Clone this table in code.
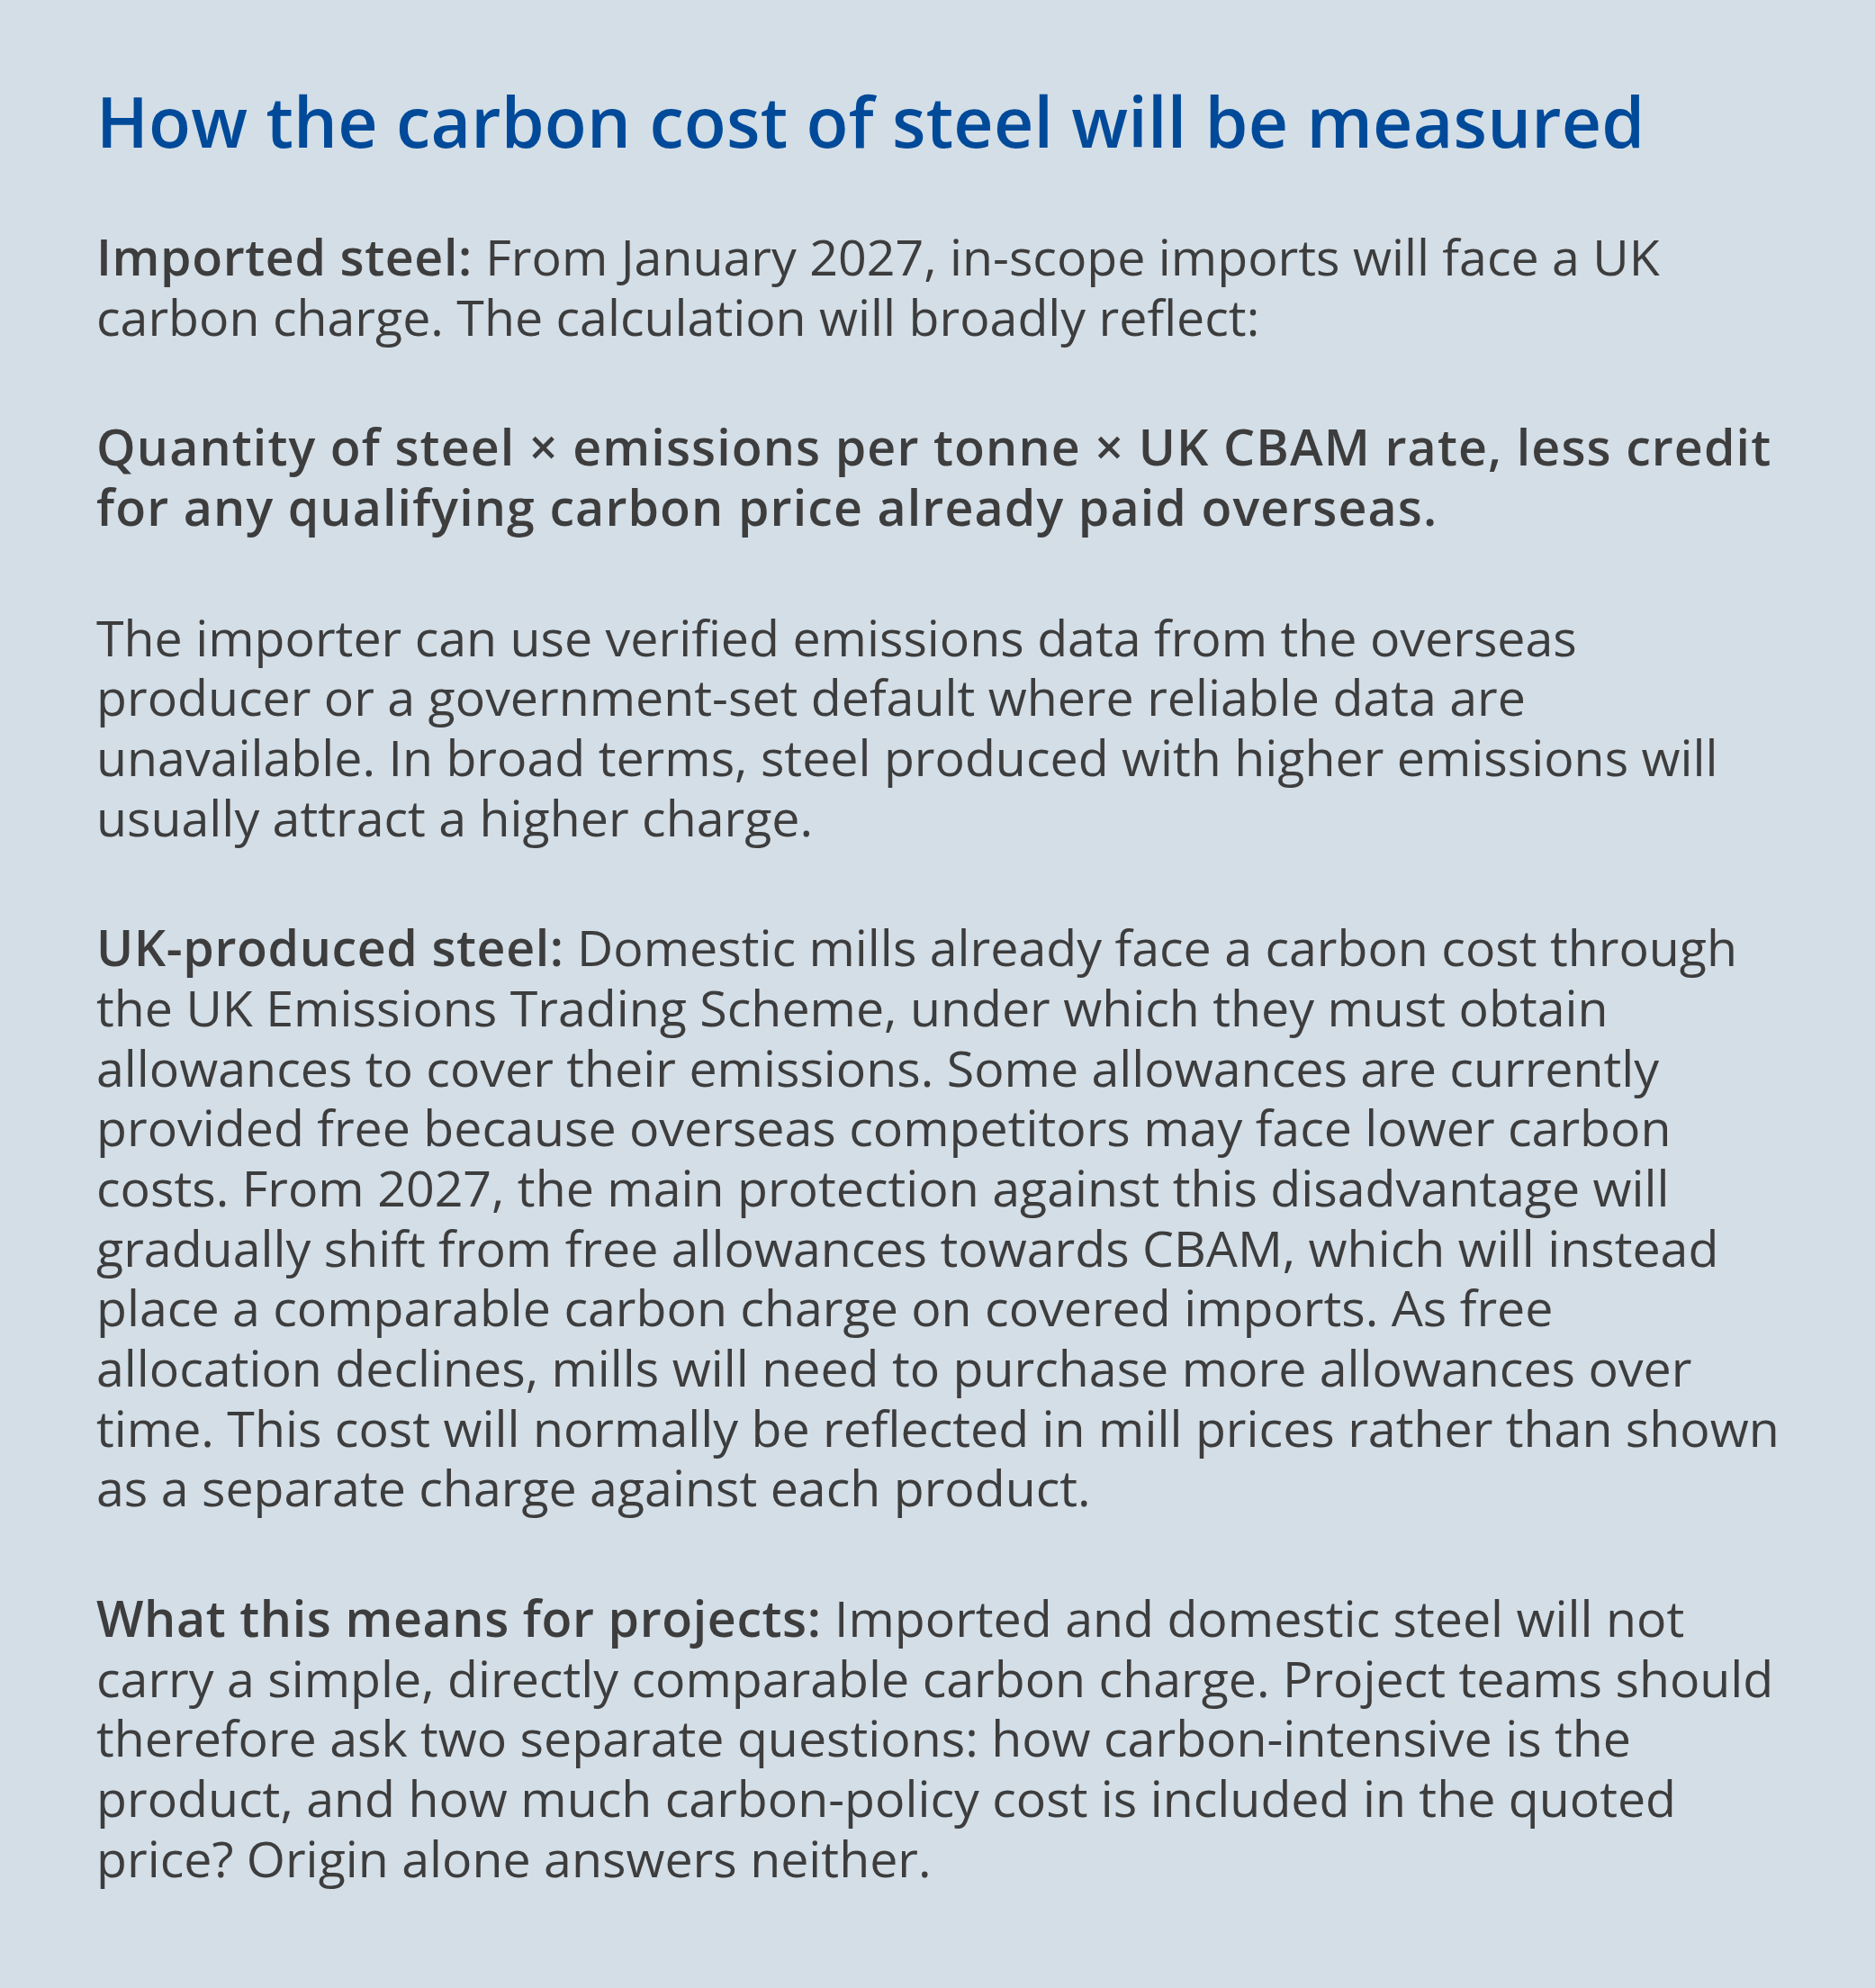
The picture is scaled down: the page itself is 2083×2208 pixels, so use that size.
const BODY = "text-[55.5px] leading-[66.67px] text-[#3d3d3d]"

function Para({ children, className = '' }: { children: React.ReactNode; className?: string }) {
  return <p className={`${BODY} ${className}`}>{children}</p>
}

export default function App() {
  return (
    <div className="min-h-[2208px] w-full bg-[#d3dee7] font-['Open_Sans',sans-serif]">
      <article className="w-[1987px] pl-[107px] pt-[90px] pb-[100px]">
        <h1 className="text-[77px] leading-[90px] font-semibold tracking-[0.2px] text-[#004a99]">
          How the carbon cost of steel will be measured
        </h1>

        <Para className="mt-[72px]">
          <strong className="font-semibold tracking-[0.6px]">Imported steel:</strong> From January 2027, in-scope
          imports will face a UK carbon charge. The calculation will broadly reflect:
        </Para>

        <Para className="mt-[78px] font-semibold tracking-[1.1px]">
          Quantity of steel × emissions per tonne × UK CBAM rate, less credit for any qualifying carbon price
          already paid overseas.
        </Para>

        <Para className="mt-[78px]">
          The importer can use verified emissions data from the overseas producer or a government-set default
          where reliable data are unavailable. In broad terms, steel produced with higher emissions will usually
          attract a higher charge.
        </Para>

        <Para className="mt-[78px]">
          <strong className="font-semibold tracking-[0.6px]">UK-produced steel:</strong> Domestic mills already
          face a carbon cost through the UK Emissions Trading Scheme, under which they must obtain allowances to
          cover their emissions. Some allowances are currently provided free because overseas competitors may face
          lower carbon costs. From 2027, the main protection against this disadvantage will gradually shift from
          free allowances towards CBAM, which will instead place a comparable carbon charge on covered imports. As
          free allocation declines, mills will need to purchase more allowances over time. This cost will
          normally be reflected in mill prices rather than shown as a separate charge against each product.
        </Para>

        <Para className="mt-[78px]">
          <strong className="font-semibold tracking-[0.6px]">What this means for projects:</strong> Imported and
          domestic steel will not carry a simple, directly comparable carbon charge. Project teams should
          therefore ask two separate questions: how carbon-intensive is the product, and how much carbon-policy
          cost is included in the quoted price? Origin alone answers neither.
        </Para>
      </article>
    </div>
  )
}
